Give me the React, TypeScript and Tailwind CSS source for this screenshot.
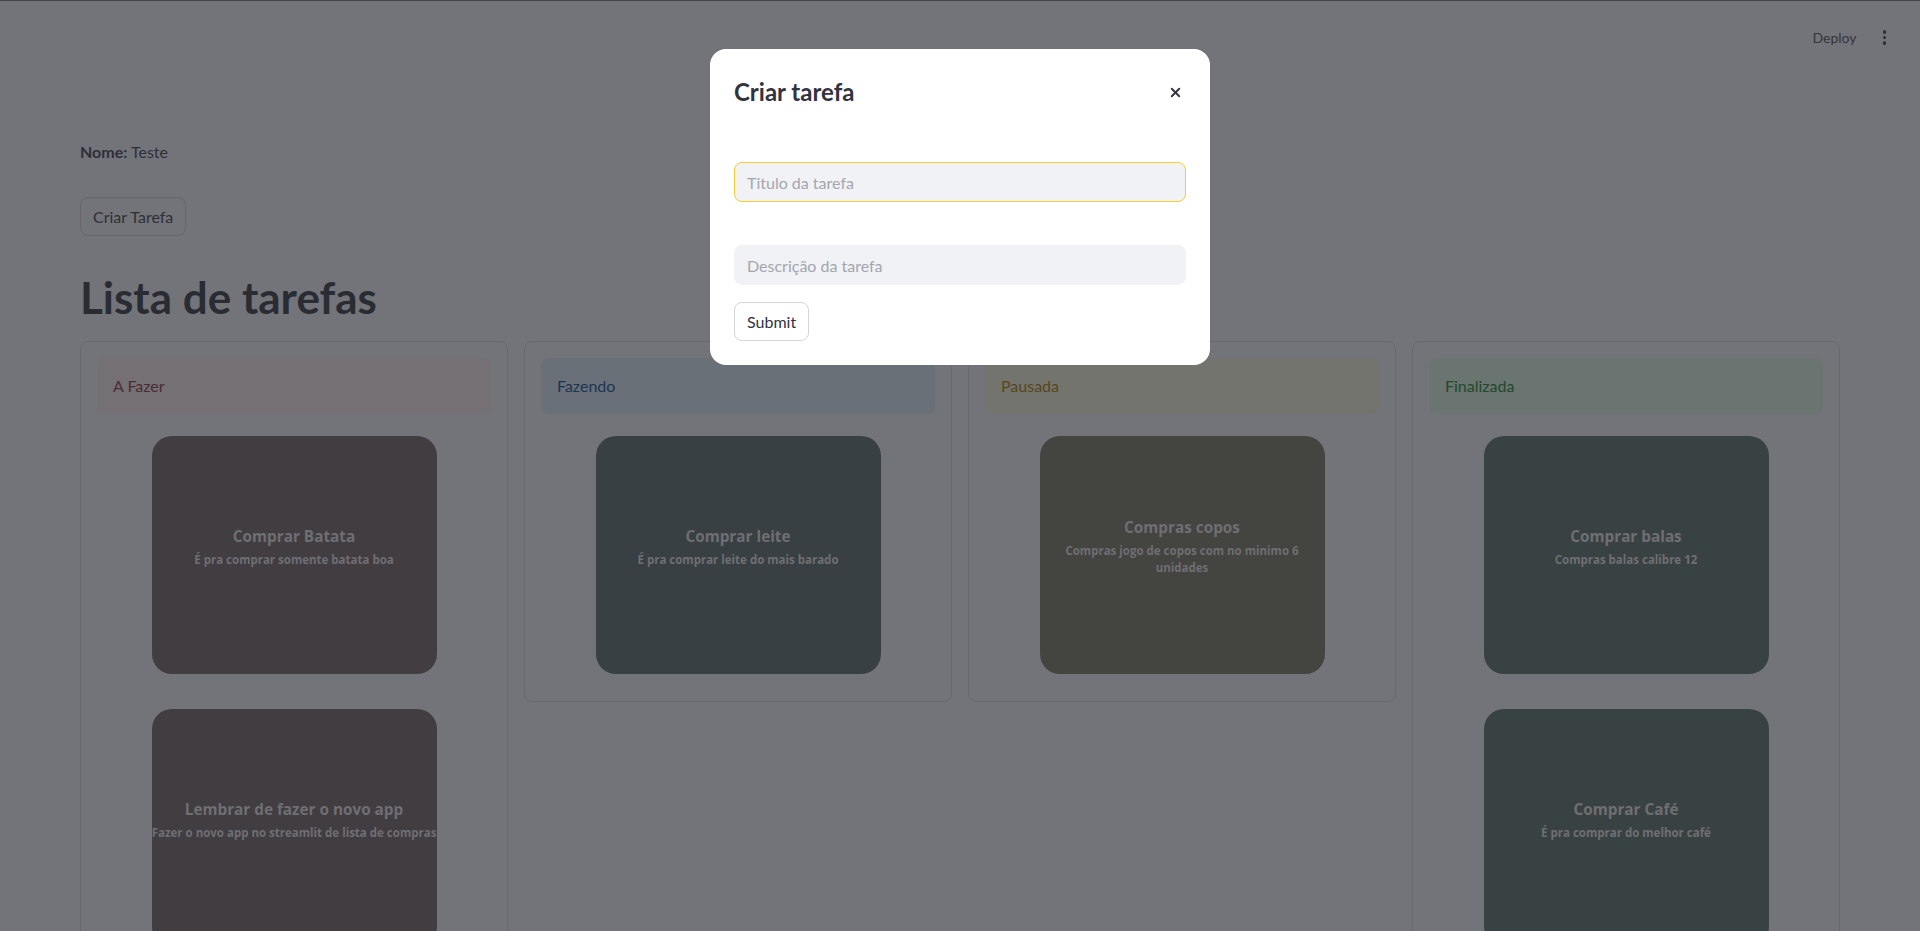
import { X } from "lucide-react";

type Task = { title: string; desc: string };

type Column = {
  label: string;
  headerBg: string;
  headerText: string;
  cardBg: string;
  tasks: Task[];
};

const columns: Column[] = [
  {
    label: "A Fazer",
    headerBg: "bg-[#757073]",
    headerText: "text-[#4b2c33]",
    cardBg: "bg-[#413d41]",
    tasks: [
      { title: "Comprar Batata", desc: "É pra comprar somente batata boa" },
      { title: "Lembrar de fazer o novo app", desc: "Fazer o novo app no streamlit de lista de compras" },
    ],
  },
  {
    label: "Fazendo",
    headerBg: "bg-[#6a7078]",
    headerText: "text-[#1c3552]",
    cardBg: "bg-[#394043]",
    tasks: [{ title: "Comprar leite", desc: "É pra comprar leite do mais barado" }],
  },
  {
    label: "Pausada",
    headerBg: "bg-[#74746e]",
    headerText: "text-[#56471b]",
    cardBg: "bg-[#444440]",
    tasks: [{ title: "Compras copos", desc: "Compras jogo de copos com no minimo 6 unidades" }],
  },
  {
    label: "Finalizada",
    headerBg: "bg-[#6a7470]",
    headerText: "text-[#1f4a2d]",
    cardBg: "bg-[#394242]",
    tasks: [
      { title: "Comprar balas", desc: "Compras balas calibre 12" },
      { title: "Comprar Café", desc: "É pra comprar do melhor café" },
    ],
  },
];

function TaskCard({ task, bg, first }: { task: Task; bg: string; first: boolean }) {
  return (
    <div
      className={`${first ? "mt-[22px]" : "mt-[24px]"} mb-[11px] mx-auto w-[285px] h-[238px] rounded-[20px] ${bg} flex flex-col items-center justify-center text-center pb-[17px] font-['Open_Sans',sans-serif] font-bold text-[#6f6e73]`}
    >
      <h3 className="text-[15.3px] leading-[21px]">{task.title}</h3>
      <p className="mt-[4px] text-[11.5px] leading-[17px]">{task.desc}</p>
    </div>
  );
}

export default function App() {
  return (
    <div className="min-h-screen bg-[#737479] font-['Lato',sans-serif] text-[#2e3038]">
      <div className="h-px bg-[#44454a]" />
      <header className="h-[73px] flex items-center justify-end pr-[34px]">
        <span className="text-[14px] text-[#33353d]">Deploy</span>
        <div className="ml-[26px] flex flex-col gap-[2px] items-center">
          <span className="w-[3.5px] h-[3.5px] rounded-full bg-[#2e3038]" />
          <span className="w-[3.5px] h-[3.5px] rounded-full bg-[#2e3038]" />
          <span className="w-[3.5px] h-[3.5px] rounded-full bg-[#2e3038]" />
        </div>
      </header>

      <main className="px-20 pb-10">
        <p className="mt-[66px] text-[16px] leading-6">
          <span className="font-bold">Nome:</span> Teste
        </p>
        <button className="mt-[33px] h-[39px] px-3 rounded-lg border border-[#65666c] text-[16px] text-[#2e3038]">
          Criar Tarefa
        </button>
        <h1 className="mt-[35px] text-[44px] leading-[52px] font-bold text-[#2a2c34]">Lista de tarefas</h1>

        <div className="mt-[18px] grid grid-cols-4 gap-4 items-start">
          {columns.map((col) => (
            <div key={col.label} className="border border-[#67686e] rounded-lg p-4 flex flex-col">
              <div className={`h-[56px] rounded-lg px-4 flex items-center text-[16px] ${col.headerBg} ${col.headerText}`}>
                {col.label}
              </div>
              {col.tasks.map((t, i) => (
                <TaskCard key={t.title} task={t} bg={col.cardBg} first={i === 0} />
              ))}
            </div>
          ))}
        </div>
      </main>

      <div className="fixed left-[710px] top-[49px] w-[500px] bg-white rounded-2xl p-6 text-[#31333f]">
        <div className="h-[38px] flex items-center justify-between">
          <h2 className="text-[24px] font-bold leading-[38px]">Criar tarefa</h2>
          <button className="w-[26px] h-[26px] flex items-center justify-center mr-[-2px]">
            <X size={15} strokeWidth={3} className="text-[#31333f]" />
          </button>
        </div>
        <input
          placeholder="Titulo da tarefa"
          className="mt-[51px] block w-full h-[40px] rounded-lg bg-[#f0f2f6] border border-[#f5cd2f] px-[12px] text-[16px] outline-none placeholder:text-[#a4a6ae]"
        />
        <input
          placeholder="Descrição da tarefa"
          className="mt-[43px] block w-full h-[40px] rounded-lg bg-[#f0f2f6] border border-[#f0f2f6] px-[12px] text-[16px] outline-none placeholder:text-[#a4a6ae]"
        />
        <button className="mt-[17px] h-[39px] px-3 rounded-lg border border-[#d5d6d9] bg-white text-[16px] text-[#31333f]">
          Submit
        </button>
      </div>
    </div>
  );
}
